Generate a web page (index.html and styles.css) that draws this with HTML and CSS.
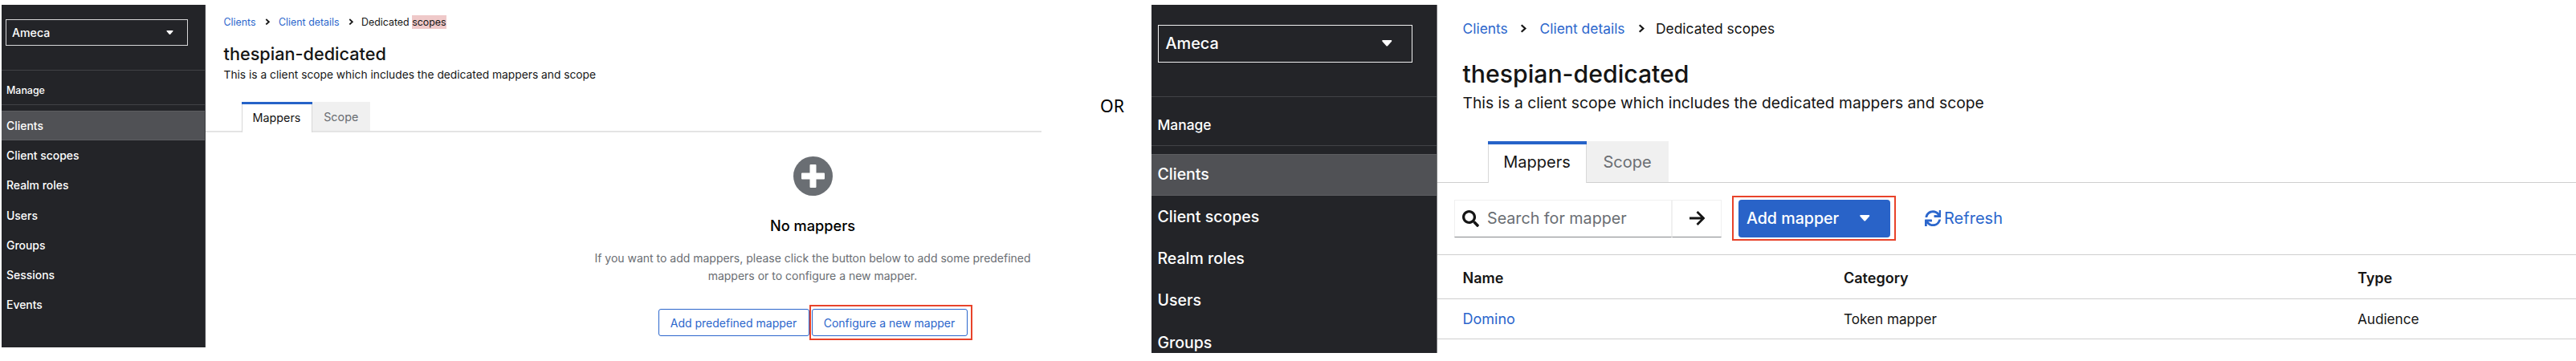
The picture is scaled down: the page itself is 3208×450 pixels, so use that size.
FILE: index.html
```html
<!DOCTYPE html>
<html lang="en">
<head>
<meta charset="utf-8">
<title>Dedicated scopes</title>
<link rel="stylesheet" href="styles.css">
</head>
<body>
<section class="app app-small">
  <nav class="sidebar">
    <div class="realm"><span>Ameca</span><svg class="caret" viewBox="0 0 12 7"><path d="M1.2 0h9.6c.9 0 1.3.9.7 1.5L7 6.5a1.4 1.4 0 0 1-2 0L.5 1.5C-.1.9.3 0 1.2 0z"/></svg></div>
    <div class="group">Manage</div>
    <ul class="nav">
      <li class="active">Clients</li><li>Client scopes</li><li>Realm roles</li><li>Users</li><li>Groups</li><li>Sessions</li><li>Events</li>
    </ul>
  </nav>
  <main class="main">
    <div class="crumbs">
      <a class="c-first">Clients</a>
      <svg class="chev" viewBox="0 0 8 10"><path d="M1.6 1l4.4 4-4.4 4"/></svg>
      <a class="c-second">Client details</a>
      <svg class="chev" viewBox="0 0 8 10"><path d="M1.6 1l4.4 4-4.4 4"/></svg>
      <span class="c-third">Dedicated <mark>scopes</mark></span>
    </div>
    <h1>thespian-dedicated</h1>
    <p class="desc">This is a client scope which includes the dedicated mappers and scope</p>
    <div class="tabs"><div class="lead"></div><div class="tab current">Mappers</div><div class="tab idle">Scope</div><div class="rest"></div></div>
    <div class="empty">
      <svg class="plus" viewBox="0 0 49 49"><circle cx="24.5" cy="24.5" r="24.5"/><path d="M21.5 10h6a1 1 0 0 1 1 1v9.500h9.500a1 1 0 0 1 1 1v6a1 1 0 0 1-1 1h-9.500v9.500a1 1 0 0 1-1 1h-6a1 1 0 0 1-1-1v-9.500h-9.500a1 1 0 0 1-1-1v-6a1 1 0 0 1 1-1h9.500v-9.500a1 1 0 0 1 1-1z"/></svg>
      <h2>No mappers</h2>
      <p>If you want to add mappers, please click the button below to add some predefined<br>mappers or to configure a new mapper.</p>
      <div class="buttons"><button class="btn b-pre">Add predefined mapper</button><button class="btn b-new">Configure a new mapper</button></div>
    </div>
  </main>
</section>
<div class="or">OR</div>
<section class="app app-large">
  <nav class="sidebar">
    <div class="realm"><span>Ameca</span><svg class="caret" viewBox="0 0 12 7"><path d="M1.2 0h9.6c.9 0 1.3.9.7 1.5L7 6.500a1.4 1.4 0 0 1-2 0L.5 1.5C-.1.9.3 0 1.2 0z"/></svg></div>
    <div class="group">Manage</div>
    <ul class="nav">
      <li class="active">Clients</li><li>Client scopes</li><li>Realm roles</li><li>Users</li><li>Groups</li>
    </ul>
  </nav>
  <main class="main">
    <div class="crumbs">
      <a class="c-first">Clients</a>
      <svg class="chev" viewBox="0 0 8 10"><path d="M1.6 1l4.4 4-4.4 4"/></svg>
      <a class="c-second">Client details</a>
      <svg class="chev" viewBox="0 0 8 10"><path d="M1.6 1l4.4 4-4.4 4"/></svg>
      <span class="c-third">Dedicated scopes</span>
    </div>
    <h1>thespian-dedicated</h1>
    <p class="desc">This is a client scope which includes the dedicated mappers and scope</p>
    <div class="tabs"><div class="lead"></div><div class="tab current">Mappers</div><div class="tab idle">Scope</div><div class="rest"></div></div>
    <div class="toolbar">
      <div class="search">
        <svg class="i-search" viewBox="0 0 512 512"><path d="M505 442.7L405.3 343c-4.500-4.500-10.600-7-17-7H372c27.600-35.300 44-79.700 44-128C416 93.100 322.900 0 208 0S0 93.100 0 208s93.100 208 208 208c48.300 0 92.700-16.400 128-44v16.300c0 6.400 2.500 12.500 7 17l99.700 99.700c9.400 9.400 24.600 9.400 33.900 0l28.300-28.300c9.400-9.400 9.400-24.600.1-34zM208 336c-70.700 0-128-57.200-128-128 0-70.700 57.200-128 128-128 70.700 0 128 57.200 128 128 0 70.700-57.200 128-128 128z"/></svg>
        <span>Search for mapper</span>
      </div>
      <div class="go"><svg class="i-arrow" viewBox="0 0 19 18"><path d="M0 9h17M9.500 1l8 8-8 8"/></svg></div>
      <button class="add"><span>Add mapper</span><svg class="caret" viewBox="0 0 12 7"><path d="M1.2 0h9.600c.9 0 1.3.9.7 1.500L7 6.500a1.4 1.4 0 0 1-2 0L.5 1.500C-.1.9.3 0 1.2 0z"/></svg></button>
      <a class="refresh"><svg class="i-sync" viewBox="0 0 512 512"><path d="M440.650 12.570l4 82.770A247.160 247.160 0 0 0 255.830 8C134.730 8 33.910 94.920 12.290 209.820A12 12 0 0 0 24.090 224h49.050a12 12 0 0 0 11.670-9.260 175.910 175.910 0 0 1 317-56.940l-101.460-4.860a12 12 0 0 0-12.570 12v47.410a12 12 0 0 0 12 12H500a12 12 0 0 0 12-12V12a12 12 0 0 0-12-12h-47.370a12 12 0 0 0-11.980 12.570zM255.830 432a175.610 175.610 0 0 1-146-77.800l101.800 4.870a12 12 0 0 0 12.570-12v-47.400a12 12 0 0 0-12-12H12a12 12 0 0 0-12 12V500a12 12 0 0 0 12 12h47.350a12 12 0 0 0 12-12.600l-4.150-82.570A247.170 247.170 0 0 0 255.830 504c121.110 0 221.930-86.920 243.550-201.820a12 12 0 0 0-11.800-14.180h-49.050a12 12 0 0 0-11.670 9.260A175.860 175.860 0 0 1 255.830 432z"/></svg><span>Refresh</span></a>
    </div>
    <div class="table">
      <div class="row head"><span>Name</span><span>Category</span><span>Type</span></div>
      <div class="row"><a class="link">Domino</a><span>Token mapper</span><span>Audience</span></div>
    </div>
  </main>
</section>
</body>
</html>
```
FILE: styles.css
```css
* { box-sizing: border-box; }
body {
  margin: 0;
  width: 3208px;
  height: 450px;
  overflow: hidden;
  display: flex;
  align-items: flex-start;
  padding: 6px 0 0 2px;
  background: #fff;
  color: #151515;
  font-family: Inter, "Liberation Sans", sans-serif;
  white-space: nowrap;
}
h1, h2, p, ul { margin: 0; padding: 0; list-style: none; }
svg { display: block; flex: none; }
button { font-family: inherit; padding: 0; margin: 0; }
a { color: #2b66cc; }

/* shared shell */
.app { display: flex; flex: none; }
.app-small { width: 1295px; height: 427px; }
.app-large { width: 1774px; height: 434px; overflow: hidden; }
.sidebar { flex: none; background: #232428; color: #fff; font-weight: 500; overflow: hidden; }
.realm { display: flex; align-items: center; justify-content: space-between; border: 1.5px solid #d6d6d8; }
.caret { fill: #fff; }
.group { border-top: 1px solid #414246; border-bottom: 1px solid #414246; display: flex; }
.nav li { display: flex; align-items: center; }
.nav .active { background: #505155; border-top: 1px solid #5c5d60; border-bottom: 1px solid #5c5d60; }
.main { flex: 1; min-width: 0; }
.crumbs { display: flex; align-items: center; }
.chev { fill: none; stroke: #151515; stroke-width: 2.1; }
h1 { font-weight: 500; }
.tabs { display: flex; }
.lead, .rest { border-bottom: 2px solid #e4e4e4; }
.rest { flex: 1; }
.tab { display: flex; align-items: center; justify-content: center; flex: none; }
.current { border-left: 1px solid #d8d8d8; border-right: 1px solid #d8d8d8; position: relative; }
.current::before { content: ""; position: absolute; top: 0; left: -1px; right: -1px; background: #2663c8; }
.idle { background: #f0f0f0; color: #6a6e73; border-bottom: 2px solid #e4e4e4; }

/* left panel */
.app-small .sidebar { width: 254px; height: 427px; border-right: 1px solid #3f4044; }
.app-small .realm { margin: 18px 0 0 5px; width: 227px; height: 33px; padding: 0 17px 1px 7px; font-size: 14.15px; }
.app-small .caret { width: 9px; height: 5px; }
.app-small .group { margin-top: 30px; height: 44px; padding: 17px 0 0 6px; font-size: 12.43px; line-height: 15px; }
.app-small .nav { margin-top: 7px; }
.app-small .nav li { height: 37.3px; padding-left: 6px; padding-bottom: 1px; font-size: 13.95px; }
.app-small .crumbs { padding-left: 22.500px; margin-top: 11px; height: 20px; font-size: 12.4px; }
.app-small .chev { width: 6.5px; height: 8.5px; }
.app-small .c-first { width: 51px; }
.app-small .c-second { width: 87px; margin-left: 11px; }
.app-small .c-third { margin-left: 9.500px; }
mark { background: #efc9c9; color: inherit; display: inline-block; height: 17px; line-height: 17px; }
.app-small h1 { padding-left: 22.500px; margin-top: 16px; font-size: 21.68px; line-height: 28px; }
.app-small .desc { padding-left: 22.500px; margin-top: 2px; font-size: 13.78px; line-height: 20px; }
.app-small .tabs { margin-top: 24px; height: 38px; }
.app-small .lead { width: 44.500px; }
.app-small .current { width: 88px; }
.app-small .current::before { height: 3px; }
.app-small .idle { width: 72.500px; }
.app-small .tab { font-size: 14.35px; }
.empty { margin-left: 471px; width: 570px; display: flex; flex-direction: column; align-items: center; text-align: center; }
.plus { width: 49px; height: 49px; margin-top: 30px; fill: #6a6e73; }
.plus path { fill: #fff; }
.empty h2 { margin-top: 24px; font-size: 18.2px; font-weight: 500; line-height: 26px; color: #000; }
.empty p { margin-top: 17px; font-size: 13.99px; line-height: 22.2px; color: #6a6e73; }
.buttons { display: flex; gap: 3px; margin-top: 29.600px; }
.btn { height: 34px; border: 1px solid #2b66cc; border-radius: 3px; background: #fff; color: #2b66cc; font-size: 14px; }
.b-pre { width: 188px; }
.b-new { width: 194px; position: relative; }
.b-new::after { content: ""; position: absolute; inset: -6px -7px -6px -4px; border: 2px solid #e8432a; }

.or { flex: none; width: 137px; padding: 106px 0 0 73px; font: 21.4px/40px "Noto Sans", sans-serif; color: #000; }

/* right panel */
.app-large .sidebar { width: 356px; height: 434px; border-right: 1px solid #77787b; }
.app-large .realm { margin: 25px 0 0 7.500px; width: 317px; height: 47px; padding: 0 24px 1px 9px; font-size: 19.84px; border: 1.500px solid #f0f0f0; }
.app-large .caret { width: 12.500px; height: 7.500px; }
.app-large .group { margin-top: 42px; height: 61.500px; padding: 25px 0 0 7.500px; font-size: 17.38px; line-height: 20px; }
.app-large .nav { margin-top: 10px; }
.app-large .nav li { height: 52.400px; padding-left: 7.500px; padding-bottom: 1px; font-size: 19.51px; }
.app-large .crumbs { padding-left: 31.500px; margin-top: 15.500px; height: 28px; font-size: 17.4px; }
.app-large .chev { width: 8.5px; height: 11px; }
.app-large .c-first { width: 71.500px; }
.app-large .c-second { width: 122px; margin-left: 16px; }
.app-large .c-third { margin-left: 14px; }
.app-large h1 { padding-left: 31.500px; margin-top: 22.500px; font-size: 30.21px; line-height: 40px; }
.app-large .desc { padding-left: 31.500px; margin-top: 2px; font-size: 19.29px; line-height: 28px; }
.app-large .tabs { margin-top: 34px; height: 52px; }
.app-large .lead { width: 62.500px; }
.app-large .current { width: 123px; }
.app-large .current::before { height: 4px; }
.app-large .idle { width: 102px; }
.app-large .tab { font-size: 20px; }
.app-large .lead, .app-large .rest, .app-large .idle { border-bottom: 1px solid #cfcfcf; }
.toolbar { display: flex; align-items: center; padding-left: 20.500px; height: 89px; }
.search, .go { height: 47px; border: 1px solid #f0f0f0; border-bottom: 1px solid #85878b; display: flex; align-items: center; padding-bottom: 1px; }
.search { width: 271.500px; color: #6a6e73; font-size: 19.71px; }
.i-search { width: 21px; height: 21px; margin: 0 10px 0 9.500px; fill: #151515; }
.go { width: 62px; justify-content: center; }
.i-arrow { width: 19px; height: 18px; fill: none; stroke: #151515; stroke-width: 2.8; }
.add { position: relative; display: flex; align-items: center; justify-content: space-between; width: 188.500px; height: 47px; margin-left: 21px; padding: 0 25px 1px 10px; border: 0; border-radius: 4px; background: #2963c8; color: #fff; font-size: 19.63px; font-weight: 500; }
.add::after { content: ""; position: absolute; inset: -5px -7px -4px -8px; border: 2px solid #e8432a; }
.refresh { display: flex; align-items: center; margin-left: 43px; gap: 4px; font-size: 20.04px; padding-bottom: 1px; }
.i-sync { width: 20.500px; height: 20.500px; fill: #2b66cc; }
.table { border-top: 1px solid #cfcfcf; }
.row { display: grid; grid-template-columns: 474.500px 640px 1fr; align-items: center; padding-left: 31.500px; height: 50px; border-bottom: 1px solid #cfcfcf; font-size: 17.15px; }
.head { height: 55px; padding-top: 3px; font-size: 18px; font-weight: 600; }
.link { font-size: 18px; }
```
